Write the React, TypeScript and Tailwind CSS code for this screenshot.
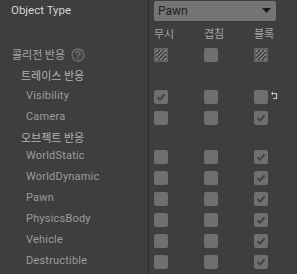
import React from 'react';

type State = 'off' | 'on' | 'mixed';

interface ResponseRow {
  label: string;
  values: [State, State, State];
  reset?: boolean;
}

const traceRows: ResponseRow[] = [
  { label: 'Visibility', values: ['on', 'off', 'off'], reset: true },
  { label: 'Camera', values: ['off', 'off', 'on'] },
];

const objectRows: ResponseRow[] = [
  { label: 'WorldStatic', values: ['off', 'off', 'on'] },
  { label: 'WorldDynamic', values: ['off', 'off', 'on'] },
  { label: 'Pawn', values: ['off', 'off', 'on'] },
  { label: 'PhysicsBody', values: ['off', 'off', 'on'] },
  { label: 'Vehicle', values: ['off', 'off', 'on'] },
  { label: 'Destructible', values: ['off', 'off', 'on'] },
];

const latin = { fontFamily: 'Roboto, "Noto Sans CJK KR", sans-serif' };
const korean = { fontFamily: '"Noto Sans CJK KR", Roboto, sans-serif' };

const CheckBox = ({ state }: { state: State }) => (
  <svg width="14" height="14" viewBox="0 0 14 14" className="block">
    <rect x="0" y="0" width="14" height="14" rx="2" fill={state === 'mixed' ? '#8a8a8a' : '#6f6f6f'} />
    {state === 'on' && (
      <path d="M3.5 7.2 L6 9.6 L10.6 4.4" fill="none" stroke="#424242" strokeWidth="2" />
    )}
    {state === 'mixed' && (
      <g>
        <rect x="1" y="1" width="12" height="12" rx="1.5" fill="none" stroke="#3a3a3a" strokeWidth="1" />
        <path d="M2 6 L6 2 M2 10 L10 2 M4 12 L12 4 M8 12 L12 8" stroke="#3a3a3a" strokeWidth="1.6" />
      </g>
    )}
  </svg>
);

const ResetIcon = () => (
  <svg width="8" height="9" viewBox="0 0 8 9" className="absolute left-[17px] top-[1px]">
    <path d="M1.5 2.5 H5.5 V7.5 H2" fill="none" stroke="#c4c4c4" strokeWidth="1.2" />
    <path d="M0 2.5 L2 0.5 L2 4.5 Z" fill="#c4c4c4" />
  </svg>
);

const HelpIcon = () => (
  <svg width="14" height="14" viewBox="0 0 14 14" className="ml-[6px]">
    <circle cx="7" cy="7" r="6" fill="#454545" stroke="#6c6c6c" strokeWidth="1.4" />
    <path d="M5 5.3 C5 3.2 9 3.2 9 5.3 C9 6.6 7 6.8 7 8.4" fill="none" stroke="#6c6c6c" strokeWidth="1.4" />
    <circle cx="7" cy="10.4" r="0.9" fill="#6c6c6c" />
  </svg>
);

const Row = ({
  height,
  label,
  children,
}: {
  height: string;
  label: React.ReactNode;
  children?: React.ReactNode;
}) => (
  <div className={`flex ${height}`}>
    <div className="w-[148px] flex items-center shrink-0">{label}</div>
    <div className="flex-1 border-l border-[#2a2a2a] pl-[5px] flex items-center">{children}</div>
  </div>
);

const Checks = ({ row }: { row: ResponseRow }) => (
  <div className="grid grid-cols-[50px_50px_50px]">
    {row.values.map((v, i) => (
      <div key={i} className="relative">
        <CheckBox state={v} />
        {i === 2 && row.reset && <ResetIcon />}
      </div>
    ))}
  </div>
);

const App = () => {
  return (
    <div className="w-[297px] h-[274px] bg-[#3e3e3e] overflow-hidden select-none">
      <Row
        height="h-[22px]"
        label={
          <span className="pl-[11px] text-[11.5px] text-[#d4d4d4]" style={latin}>
            Object Type
          </span>
        }
      >
        <div className="w-[122px] h-[20px] mt-[-1px] bg-[#747474] rounded-[2px] flex items-center justify-between px-[4px]">
          <span className="text-[12px] text-[#1e1e1e]" style={latin}>
            Pawn
          </span>
          <svg width="9" height="5" viewBox="0 0 9 5" className="mr-[1px]">
            <path d="M0 0 H9 L4.5 5 Z" fill="#1a1a1a" />
          </svg>
        </div>
      </Row>

      <Row height="h-[22px]" label={null}>
        <div className="grid grid-cols-[50px_50px_50px] text-[11px] text-[#a4a4a4]" style={korean}>
          <span>무시</span>
          <span>겹침</span>
          <span>블록</span>
        </div>
      </Row>

      <Row
        height="h-[21px]"
        label={
          <div className="pl-[12px] flex items-center text-[11px] text-[#a8a8a8]" style={korean}>
            콜리전 반응
            <HelpIcon />
          </div>
        }
      >
        <Checks row={{ label: '', values: ['mixed', 'off', 'mixed'] }} />
      </Row>

      <Row
        height="h-[21px]"
        label={
          <span className="pl-[21px] text-[11px] text-[#b4b4b4]" style={korean}>
            트레이스 반응
          </span>
        }
      />
      {traceRows.map((row) => (
        <Row
          key={row.label}
          height="h-[21px]"
          label={
            <span className="pl-[26px] text-[11px] text-[#9c9c9c] tracking-[0.2px]" style={latin}>
              {row.label}
            </span>
          }
        >
          <Checks row={row} />
        </Row>
      ))}

      <Row
        height="h-[18px]"
        label={
          <span className="pl-[21px] text-[11px] text-[#b4b4b4]" style={korean}>
            오브젝트 반응
          </span>
        }
      />
      {objectRows.map((row) => (
        <Row
          key={row.label}
          height="h-[21px]"
          label={
            <span className="pl-[26px] text-[11px] text-[#9c9c9c] tracking-[0.2px]" style={latin}>
              {row.label}
            </span>
          }
        >
          <Checks row={row} />
        </Row>
      ))}
      <Row height="h-[2px]" label={null} />
    </div>
  );
};

export default App;
